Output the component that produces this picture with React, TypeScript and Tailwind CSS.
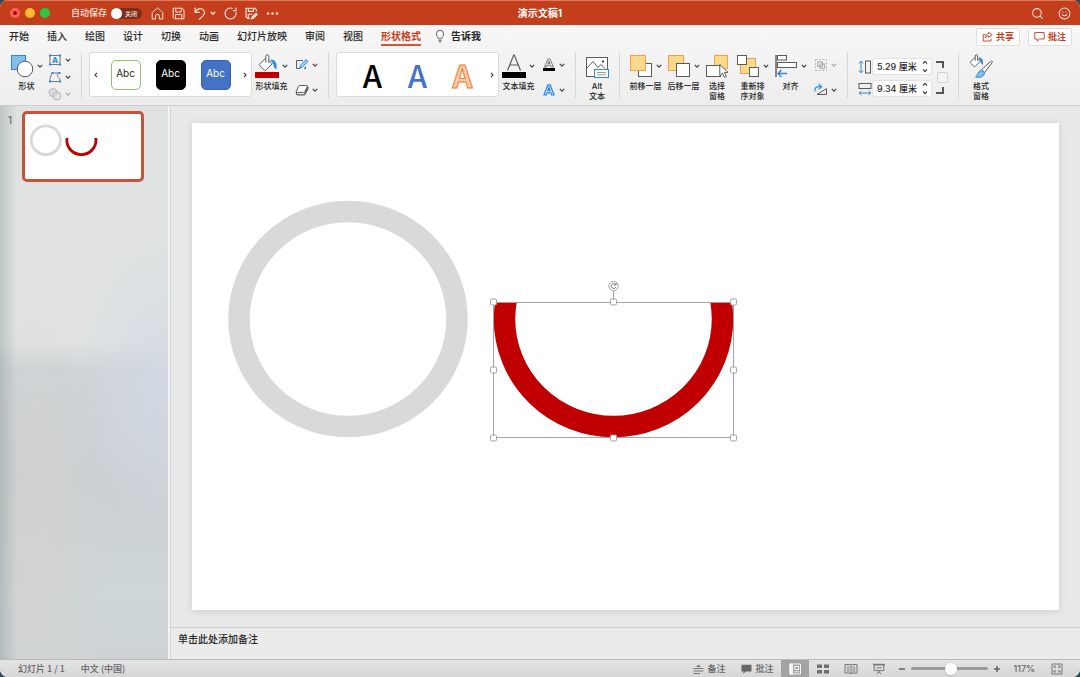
import { Search, Smile } from "lucide-react";
import React, { useState } from "react";

const TABS = ["开始", "插入", "绘图", "设计", "切换", "动画", "幻灯片放映", "审阅", "视图", "形状格式"];

const BLUE = "#2b88d8";
const INK = "#5a5a5a";

function Chevron({ dim }: { dim?: boolean }): React.ReactElement {
	return (
		<svg viewBox="0 0 6 6" className="h-[6px] w-[6px] shrink-0" fill="none" stroke={dim ? "#a8a8a8" : "#444"} strokeWidth="1.2">
			<path d="M0.8 1.8 L3 4.2 L5.2 1.8" />
		</svg>
	);
}

function Arrow({ left }: { left?: boolean }): React.ReactElement {
	return (
		<button aria-label={left ? "上一个" : "下一个"} className="flex h-full w-[6px] shrink-0 items-center">
			<svg viewBox="0 0 6 8" className="h-2 w-[6px]" fill="none" stroke="#333" strokeWidth="1.1">
				<path d={left ? "M4 1.8 L2 4 L4 6.2" : "M2 1.8 L4 4 L2 6.2"} />
			</svg>
		</button>
	);
}

function Icon({ children, small }: { children: React.ReactNode; small?: boolean }): React.ReactElement {
	return small ? (
		<svg viewBox="0 0 14 14" className="h-[14px] w-[14px] shrink-0" fill="none" stroke={INK} strokeWidth="1">
			{children}
		</svg>
	) : (
		<svg viewBox="0 0 24 24" className="h-6 w-6 shrink-0" fill="none" stroke={INK} strokeWidth="1">
			{children}
		</svg>
	);
}

function Tool({
	lines,
	menu,
	children,
}: {
	lines: string[];
	menu?: boolean;
	children: React.ReactNode;
}): React.ReactElement {
	return (
		<button className={`flex shrink-0 flex-col items-center pt-[2px] ${menu ? "w-[33px]" : "w-6"}`}>
			<span className="flex h-6 items-center gap-[3px]">
				<Icon>{children}</Icon>
				{menu && <Chevron />}
			</span>
			<span className="mt-[3px] flex flex-col items-center text-[8px] leading-[10px] font-medium whitespace-nowrap">
				{lines.map(line => (
					<span key={line}>{line}</span>
				))}
			</span>
		</button>
	);
}

function SmallTool({ label, dim, children }: { label: string; dim?: boolean; children: React.ReactNode }): React.ReactElement {
	return (
		<button aria-label={label} className="flex flex-1 items-center gap-[3px]">
			<Icon small>{children}</Icon>
			<Chevron dim={dim} />
		</button>
	);
}

function SmallColumn({ children }: { children: React.ReactNode }): React.ReactElement {
	return <div className="flex h-[50px] w-[23px] shrink-0 flex-col">{children}</div>;
}

function Divider(): React.ReactElement {
	return <div className="ml-[10px] h-[46px] w-px shrink-0 bg-[#d6d6d6]" />;
}

function Gallery({ children, back }: { children: React.ReactNode; back?: boolean }): React.ReactElement {
	return (
		<div className="mr-[3px] ml-[7px] flex h-[45px] w-[163px] shrink-0 items-center rounded-[3px] border border-[#dadada] bg-white px-[3px]">
			{back ? <Arrow left /> : <span className="w-[6px]" />}
			<div className="flex flex-1 items-center justify-center gap-[15px]">{children}</div>
			<Arrow />
		</div>
	);
}

function TitleBar(): React.ReactElement {
	const icon = "h-[13px] w-[13px]";
	return (
		<header className="grid h-[25px] shrink-0 grid-cols-[1fr_auto_1fr] items-center border-t border-[#d87c62] bg-[#c43e1c] text-[#fbe3db]">
			<div className="flex items-center pl-[10px]">
				<div className="flex gap-[5px]">
					<button aria-label="关闭窗口" className="flex h-[10px] w-[10px] items-center justify-center rounded-full bg-[#ff5f57]">
						<span className="h-1 w-1 rounded-full bg-[#8c1410]" />
					</button>
					<button aria-label="最小化" className="h-[10px] w-[10px] rounded-full bg-[#febc2e]" />
					<button aria-label="缩放" className="h-[10px] w-[10px] rounded-full bg-[#28c840]" />
				</div>
				<label className="relative ml-[21px] flex items-center gap-1 text-[9px] leading-3 font-medium">
					自动保存
					<input
						type="checkbox"
						className="h-[11px] w-[31px] appearance-none rounded-full bg-[#7c2f1d] before:block before:h-[11px] before:w-[11px] before:rounded-full before:bg-white"
					/>
					<span className="absolute right-[5px] text-[6px] leading-[11px]">关闭</span>
				</label>
				<div className="ml-[9px] flex items-center gap-2">
					<button aria-label="主页">
						<svg viewBox="0 0 13 13" className={icon} fill="none" stroke="currentColor" strokeWidth="1">
							<path
								d="M1.2 5.6 L6.5 0.8 L11.8 5.6 V12 H8.4 V9 Q8.4 7.4 6.5 7.4 Q4.6 7.4 4.6 9 V12 H1.2 Z"
								strokeLinejoin="round"
							/>
						</svg>
					</button>
					<button aria-label="保存">
						<svg viewBox="0 0 13 13" className={icon} fill="none" stroke="currentColor" strokeWidth="1">
							<path
								d="M1.2 1.2 H10.2 L12 3 V11.8 H2.6 L1.2 10.4 Z M3.8 1.2 V5 H9.2 V1.2 M3.5 11.8 V7.5 H9.8 V11.8"
								strokeLinejoin="round"
							/>
						</svg>
					</button>
					<button aria-label="撤消" className="flex items-center gap-1">
						<svg viewBox="0 0 13 13" className={icon} fill="none" stroke="currentColor" strokeWidth="1.1">
							<path d="M2 0.6 V5.4 H6.8 M2 5.4 C4 2.2 6.8 1 9.2 2 C12 3.4 12 6.8 10 8.8 L6 12.6" />
						</svg>
						<svg viewBox="0 0 6 6" className="h-[6px] w-[6px]" fill="none" stroke="currentColor" strokeWidth="1.3">
							<path d="M0.8 1.8 L3 4.2 L5.2 1.8" />
						</svg>
					</button>
					<button aria-label="重复">
						<svg viewBox="0 0 13 13" className={icon} fill="none" stroke="currentColor" strokeWidth="1.1">
							<path d="M8.6 1.4 A5.5 5.5 0 1 0 11.8 5 M12 0.6 V3.6 H9" />
						</svg>
					</button>
					<button aria-label="另存为">
						<svg viewBox="0 0 13 13" className={icon} fill="none" stroke="currentColor" strokeWidth="1.1">
							<path d="M5 11.4 H2.6 L1 9.8 V1.2 H9.8 L11.4 2.8 V4.6 M3.4 1.2 V4.4 H8.4 V1.2 M3.2 11.2 V7.2 H7.4" />
							<path d="M5.6 12.8 L6.6 9.8 L11 5.4 L13 7.4 L8.6 11.8 Z" fill="currentColor" stroke="none" />
						</svg>
					</button>
					<button aria-label="更多">
						<svg viewBox="0 0 13 13" className={icon} fill="currentColor">
							<circle cx="2" cy="6.5" r="1.2" />
							<circle cx="6.5" cy="6.5" r="1.2" />
							<circle cx="11" cy="6.5" r="1.2" />
						</svg>
					</button>
				</div>
			</div>
			<h1 className="text-[10px] leading-3 font-bold text-white">演示文稿1</h1>
			<div className="flex items-center justify-end gap-[14px] pr-[9px]">
				<button aria-label="搜索">
					<Search className={icon} strokeWidth={1.9} />
				</button>
				<button aria-label="反馈">
					<Smile className={icon} strokeWidth={1.9} />
				</button>
			</div>
		</header>
	);
}

function TabBar(): React.ReactElement {
	const [active, setActive] = useState("形状格式");
	const action =
		"flex h-[18px] items-center gap-[3px] rounded-[2px] border border-[#e0dedd] bg-white px-[5px] text-[9px] leading-3 font-bold text-[#c43e1c]";

	return (
		<div className="flex h-[23px] shrink-0 items-center justify-between pr-2 pl-[9px]">
			<nav className="flex h-full items-start gap-[18px] text-[10px] leading-3 font-medium">
				{TABS.map(tab => (
					<button
						key={tab}
						onClick={() => setActive(tab)}
						className={`h-[21px] border-b-2 pt-[5px] pb-[2px] leading-3 ${
							tab === active ? "border-[#d4573c] font-bold text-[#c43e1c]" : "border-transparent"
						}`}
					>
						{tab}
					</button>
				))}
				<button className="-ml-[5px] flex h-[21px] items-center gap-[5px] font-bold">
					<svg viewBox="0 0 12 14" className="h-[14px] w-3" fill="none" stroke={INK} strokeWidth="1">
						<path d="M4.4 9.8 C4.4 8 2.4 7.4 2.4 4.8 A3.6 3.6 0 0 1 9.6 4.8 C9.6 7.4 7.6 8 7.6 9.8 Z M4.6 11.4 H7.4 M5 13 H7" />
					</svg>
					告诉我
				</button>
			</nav>
			<div className="flex gap-2">
				<button className={action}>
					<svg viewBox="0 0 11 11" className="h-[11px] w-[11px]" fill="none" stroke="currentColor" strokeWidth="0.9">
						<path d="M3.4 3.6 H1.2 V10 H9 V7.6" />
						<path d="M6.6 1.2 L10.2 3.8 L6.6 6.4 V4.9 C5 4.9 4 5.6 3.2 7.2 C3.3 4.6 4.6 2.9 6.6 2.7 Z" strokeLinejoin="round" />
					</svg>
					共享
				</button>
				<button className={action}>
					<svg viewBox="0 0 11 11" className="h-[11px] w-[11px]" fill="none" stroke="currentColor" strokeWidth="0.9">
						<path d="M0.8 1.5 H10.2 V8 H5.4 L3.2 10.2 V8 H0.8 Z" strokeLinejoin="round" />
					</svg>
					批注
				</button>
			</div>
		</div>
	);
}

function SizeField({
	label,
	value,
	onChange,
	children,
}: {
	label: string;
	value: string;
	onChange: (v: string) => void;
	children: React.ReactNode;
}): React.ReactElement {
	return (
		<label className="flex items-center">
			<Icon small>{children}</Icon>
			<span className="flex h-[17px] w-[60px] items-center rounded-[3px] border border-[#e2e2e2] bg-white pr-[3px] pl-1">
				<input
					type="text"
					aria-label={label}
					value={value}
					onChange={e => onChange(e.target.value)}
					className="w-full min-w-0 text-[9px] leading-3 font-medium outline-none"
				/>
				<svg viewBox="0 0 6 13" className="h-[13px] w-[6px] shrink-0" fill="none" stroke="#333" strokeWidth="1.1">
					<path d="M1 3.6 L3 1.4 L5 3.6 M1 9.4 L3 11.6 L5 9.4" />
				</svg>
			</span>
		</label>
	);
}

function Ribbon(): React.ReactElement {
	const [height, setHeight] = useState("5.29 厘米");
	const [width, setWidth] = useState("9.34 厘米");
	const abc = "h-[30px] w-[30px] rounded-[5px] border pb-[3px] text-[10px] leading-4";
	const art = "h-[34px] w-[30px] font-['Noto_Sans_CJK_SC',sans-serif] text-[31px] leading-[34px]";

	return (
		<div className="flex h-[58px] shrink-0 items-start overflow-hidden border-b border-[#cfcfcf] pt-1 pl-[10px]">
			<Tool lines={["形状"]} menu>
				<rect x="1.5" y="1.5" width="14" height="14" fill="#83bdec" stroke={BLUE} />
				<circle cx="15" cy="15" r="7.8" fill="#fff" />
			</Tool>
			<div className="ml-[5px]">
				<SmallColumn>
					<SmallTool label="文本框">
						<rect x="2" y="2.5" width="10" height="9" stroke="#777" />
						<text x="7" y="10" fontSize="8" fontWeight="700" textAnchor="middle" fill={BLUE} stroke="none">
							A
						</text>
						<path d="M1 1.5h2v2h-2z M11 1.5h2v2h-2z M1 10.5h2v2h-2z M11 10.5h2v2h-2z" fill={BLUE} stroke="none" />
					</SmallTool>
					<SmallTool label="编辑形状">
						<path d="M4.5 3 H11.5 C8.5 4.5 9 6.5 10.5 7.5 C12 8.5 12.2 10 12 11.5 H2 C2 8 2 6 4.5 3 Z" stroke="#777" />
						<path d="M3.5 2h2v2h-2z M10.5 2h2v2h-2z M1 10.5h2v2h-2z M11 10.5h2v2h-2z" fill={BLUE} stroke="none" />
					</SmallTool>
					<SmallTool label="合并形状" dim>
						<circle cx="5" cy="5.5" r="4" stroke="#b5b5b5" fill="#dcdcdc" />
						<circle cx="9" cy="9" r="4" stroke="#b5b5b5" fill="#dcdcdc" fillOpacity="0.6" />
					</SmallTool>
				</SmallColumn>
			</div>
			<Divider />

			<Gallery back>
				<button className={`${abc} border-[#8fc06c] bg-white`}>Abc</button>
				<button className={`${abc} border-black bg-black text-white`}>Abc</button>
				<button className={`${abc} border-[#3562b0] bg-[#4472c4] text-white`}>Abc</button>
			</Gallery>
			<Tool lines={["形状填充"]} menu>
				<path
					d="M10.8 4 L4.6 10.2 C4.2 10.6 4.2 11 4.6 11.4 L9.4 16.2 C9.8 16.6 10.4 16.6 10.8 16.2 L17.2 9.8 L14 6.6"
					fill="#fff"
				/>
				<path d="M10.8 8.6 V2.4 Q10.8 0.8 12.2 0.8 Q13.8 0.8 13.8 2.4 V8.8" fill="#fff" />
				<path d="M15 5.4 C20 5.2 22.4 8.4 21.4 15.4 C19.4 15 18.6 12.4 18.2 9.6 Z" fill={BLUE} stroke="none" />
				<rect x="0" y="18" width="24" height="6" fill="#c00000" stroke="none" />
			</Tool>
			<div className="ml-[7px]">
				<SmallColumn>
					<SmallTool label="形状轮廓">
						<path d="M8 2.5 H1.5 V10.5 H5 M9 10.5 H10.5 V8.5" />
						<path d="M4.6 10.4 L5.4 7.2 L11 1.6 L13 3.4 L7.4 9.2 Z" fill="#9fd0f5" stroke={BLUE} />
					</SmallTool>
					<SmallTool label="形状效果">
						<path
							d="M4.6 2.5 H11.4 Q12.6 2.5 12.2 3.6 L9.8 8.6 Q9.4 9.4 8.4 9.4 H2.2 Q1 9.4 1.4 8.4 L3.6 3.2 Q4 2.5 4.6 2.5 Z"
							fill="#fff"
						/>
						<path d="M1.3 9 Q1.4 11.8 2.8 11.8 H8.6 Q9.6 11.8 10.2 10.8 L12.8 6 Q13.2 5 12.4 3.4" strokeWidth="1.3" />
						<path d="M9.4 9.4 L12.2 4.4 L12.6 6 L9.6 11.4 Z" fill={INK} stroke="none" />
					</SmallTool>
				</SmallColumn>
			</div>
			<Divider />

			<Gallery>
				<button className={`${art} font-medium text-black`}>A</button>
				<button className={`${art} font-medium text-[#4472c4]`}>A</button>
				<button className={`${art} font-bold text-[#f8cbad] [-webkit-text-stroke:1px_#ed7d31]`}>A</button>
			</Gallery>
			<Tool lines={["文本填充"]} menu>
				<path d="M5.5 16.5 L11.7 1 H12.3 L18.5 16.5 M7.8 11 H16.2" strokeWidth="1.2" />
				<rect x="0" y="18" width="24" height="6" fill="#000" stroke="none" />
			</Tool>
			<div className="ml-[7px]">
				<SmallColumn>
					<SmallTool label="文本轮廓">
						<path d="M2.5 9 L6 1 H8 L11.5 9 H9.4 L8.7 7.2 H5.3 L4.6 9 Z M6 5.6 H8 L7 3 Z" strokeWidth="0.8" />
						<rect x="1" y="10" width="12" height="3" fill="#000" stroke="none" />
					</SmallTool>
					<SmallTool label="文本效果">
						<path
							d="M2 12 L5.8 1.8 H8.2 L12 12 H9.6 L8.9 9.8 H5.1 L4.4 12 Z M5.9 7.6 H8.1 L7 4.2 Z"
							fill="#d3e9fb"
							stroke={BLUE}
							strokeWidth="1.2"
						/>
					</SmallTool>
				</SmallColumn>
			</div>
			<Divider />

			<div className="ml-[9px]">
				<Tool lines={["Alt", "文本"]}>
					<rect x="1.5" y="3.5" width="21" height="19" fill="#fff" />
					<path d="M1.5 14.5 L8 7.5 L13 13.5 L16 10.5 L20 14.5" />
					<circle cx="18" cy="7.5" r="1.2" fill={INK} stroke="none" />
					<rect x="9.5" y="15.5" width="14" height="8" fill="#fff" stroke={BLUE} />
					<path d="M12 18.5 H21 M12 20.8 H21" stroke="#999" />
				</Tool>
			</div>
			<Divider />

			<div className="ml-[9px] flex">
				<div className="flex gap-[5px]">
					<Tool lines={["前移一层"]} menu>
						<rect x="9.5" y="9.5" width="13" height="13" fill="#fff" />
						<rect x="1.5" y="1.5" width="15" height="15" fill="#fbd98a" stroke="#f0a04c" />
					</Tool>
					<Tool lines={["后移一层"]} menu>
						<rect x="1.5" y="1.5" width="15" height="15" fill="#fbd98a" stroke="#f0a04c" />
						<rect x="9.5" y="9.5" width="13" height="13" fill="#fff" />
					</Tool>
					<Tool lines={["选择", "窗格"]}>
						<rect x="9.5" y="1.5" width="13" height="13" fill="#fbd98a" stroke="#f0a04c" />
						<rect x="1.5" y="11.5" width="14" height="11" fill="#fff" />
						<path d="M14.8 10.5 V21.6 L17.5 19.2 L19.4 23.4 L21.4 22.5 L19.4 18.4 H23 Z" fill="#fff" />
					</Tool>
				</div>
				<div className="ml-[7px] flex gap-[5px]">
					<Tool lines={["重新排", "序对象"]} menu>
						<rect x="4.5" y="4.5" width="15" height="15" fill="#fbd98a" stroke="#f0a04c" />
						<rect x="1.5" y="1.5" width="9" height="9" fill="#fff" />
						<rect x="13.5" y="13.5" width="9" height="9" fill="#fff" />
					</Tool>
					<Tool lines={["对齐"]} menu>
						<path d="M2 1 V23" strokeWidth="1.4" />
						<rect x="3.5" y="1.5" width="9" height="4.5" fill="#fff" />
						<rect x="3.5" y="8.5" width="19" height="5" fill="#fff" />
						<path d="M4 19.5 H13 M7.5 16 L4 19.5 L7.5 23" stroke={BLUE} strokeWidth="1.3" />
					</Tool>
				</div>
				<div className="ml-[7px]">
					<SmallColumn>
						<SmallTool label="组合" dim>
							<rect x="1.5" y="1.5" width="11" height="11" stroke="#b5b5b5" strokeDasharray="2 1.5" />
							<rect x="3.8" y="3.8" width="4.6" height="4.6" stroke="#a5a5a5" />
							<rect x="6" y="6" width="4.4" height="4.4" stroke="#a5a5a5" />
						</SmallTool>
						<SmallTool label="旋转">
							<path d="M3 11.5 L12.5 5.6 V11.5 Z" />
							<path d="M1.2 8.4 C0.2 4.4 3.2 3 7 3.8 M4.6 0.8 L7.6 3.9 L4.6 6.4" stroke={BLUE} strokeWidth="1.2" />
						</SmallTool>
					</SmallColumn>
				</div>
			</div>
			<Divider />

			<div className="ml-[10px] flex">
				<div className="flex flex-col gap-[5px] pt-[6px]">
					<SizeField label="高度" value={height} onChange={setHeight}>
						<rect x="7.5" y="1" width="5" height="12" />
						<path d="M3 1.2 V12.8 M1 3.4 L3 1.2 L5 3.4 M1 10.6 L3 12.8 L5 10.6" stroke={BLUE} />
					</SizeField>
					<SizeField label="宽度" value={width} onChange={setWidth}>
						<rect x="1" y="1.5" width="12" height="5" />
						<path d="M1.2 11 H12.8 M3.4 9 L1.2 11 L3.4 13 M10.6 9 L12.8 11 L10.6 13" stroke={BLUE} />
					</SizeField>
				</div>
				<div className="ml-1 flex w-3 flex-col items-center gap-1 pt-[9px]">
					<span className="mr-1 h-[7px] w-2 border-t-2 border-r-2 border-[#555]" />
					<input
						type="checkbox"
						aria-label="锁定纵横比"
						className="h-[11px] w-[11px] appearance-none rounded-[2px] border border-[#d2d2d2] bg-[#f3f3f3]"
					/>
					<span className="mr-1 h-[7px] w-2 border-r-2 border-b-2 border-[#555]" />
				</div>
			</div>
			<Divider />

			<div className="ml-[10px]">
				<Tool lines={["格式", "窗格"]}>
					<path d="M6.2 3.2 L1.6 7.8 Q1 8.4 1.6 9 L5 12.4 Q5.6 13 6.2 12.4 L11.4 7.2 L8.8 4.6" fill="#fff" />
					<path d="M6.2 6.6 V2 Q6.2 0.8 7.4 0.8 Q8.6 0.8 8.6 2 V6.8" fill="#fff" />
					<path d="M9.6 3.4 C13 3.2 14.6 5.8 13.8 11 C12.2 10.4 11.8 8.4 11.6 7 Z" fill={BLUE} stroke="none" />
					<path d="M12.6 15.6 L21.8 7.4 C22.8 6.6 24 7.6 23.2 8.6 L15.6 18.4 Z" fill="#fff" />
					<path d="M6.5 22.8 C9 21.8 8.6 17 12.4 16 L15.4 18.6 C15.6 23 10 24.4 6.5 22.8 Z" fill="#83bdec" stroke={BLUE} />
				</Tool>
			</div>
		</div>
	);
}

// Grey ring plus the cut red arc, shared by the canvas and the thumbnail
function SlideShapes({ id }: { id: string }): React.ReactElement {
	return (
		<>
			<clipPath id={id}>
				<rect x="300" y="179" width="250" height="140" />
			</clipPath>
			<ellipse cx="156" cy="196" rx="109" ry="107.5" fill="none" stroke="#d9d9d9" strokeWidth="21.5" />
			<ellipse cx="421.5" cy="196" rx="109" ry="107.5" fill="none" stroke="#c00000" strokeWidth="21.5" clipPath={`url(#${id})`} />
		</>
	);
}

const HANDLES = [
	[301.5, 179],
	[421.5, 179],
	[541.5, 179],
	[301.5, 247],
	[541.5, 247],
	[301.5, 315],
	[421.5, 315],
	[541.5, 315],
];

function Canvas(): React.ReactElement {
	return (
		<svg viewBox="0 0 867 487" className="block w-full bg-white shadow-[0_1px_8px_rgba(0,0,0,0.13)]">
			<SlideShapes id="arc-main" />
			<g fill="#fff" stroke="#a3a3a3" strokeWidth="1">
				<rect x="301.5" y="179.5" width="240" height="135" fill="none" />
				<path d="M421.5 168 V179" />
				{HANDLES.map(([x, y]) => (
					<rect key={`${x}-${y}`} x={x - 3} y={y - 3} width="6" height="6" rx="1.2" />
				))}
				<circle cx="421.5" cy="163" r="4.6" />
				<path d="M423.2 161.2 A2.4 2.4 0 1 0 423.8 164 M424 160 V162 H422" fill="none" stroke="#666" strokeWidth="0.9" />
			</g>
		</svg>
	);
}

function ViewButton({ label, active, children }: { label: string; active?: boolean; children: React.ReactNode }): React.ReactElement {
	return (
		<button aria-label={label} className={`flex h-full w-7 items-center justify-center ${active ? "bg-[#a3a3a3]" : ""}`}>
			<svg viewBox="0 0 14 12" className="h-3 w-[14px]" fill="none" stroke={active ? "#f5f5f5" : "#777"} strokeWidth="1">
				{children}
			</svg>
		</button>
	);
}

function StatusBar(): React.ReactElement {
	const [zoom, setZoom] = useState(51);

	return (
		<footer className="flex h-[18px] shrink-0 items-center justify-between border-t border-[#b9b9b9] bg-linear-to-b from-[#e4e4e4] to-[#d6d6d6] pr-[17px] pl-[18px] text-[9px] leading-3 text-[#666]">
			<div className="flex gap-4 font-['Noto_Sans_CJK_SC',sans-serif] font-medium">
				<span>幻灯片 1 / 1</span>
				<span>中文 (中国)</span>
			</div>
			<div className="flex h-full items-center">
				<button className="flex items-center gap-[3px] font-medium">
					<svg viewBox="0 0 11 10" className="h-[10px] w-[11px]" stroke="#777" strokeWidth="1">
						<path d="M0.5 4.5 H10.5 M0.5 7 H10.5 M0.5 9.5 H7" />
						<path d="M3 3 L5.5 0.4 L8 3 Z" fill="#777" stroke="none" />
					</svg>
					备注
				</button>
				<button className="mr-2 ml-4 flex items-center gap-[3px] font-medium">
					<svg viewBox="0 0 11 10" className="h-[10px] w-[11px]" fill="#666">
						<path d="M0.5 0.8 H10.5 V7.4 H4.8 L2.4 9.8 V7.4 H0.5 Z" />
					</svg>
					批注
				</button>
				<ViewButton label="普通视图" active>
					<path d="M2 1 H12.5 V11 H2 Z" />
					<path d="M2 1 H4.6 V11 H2 Z" fill="#f5f5f5" />
					<path d="M6.8 3.5 H10.6 V6.5 H6.8 Z M6.5 8.8 H11" />
				</ViewButton>
				<ViewButton label="幻灯片浏览">
					<path d="M1 1.5h5v3.6h-5z M8 1.5h5v3.6h-5z M1 7h5v3.6h-5z M8 7h5v3.6h-5z" fill="#6e6e6e" stroke="none" />
				</ViewButton>
				<ViewButton label="阅读视图">
					<path d="M1 1.5 H6 L7 2.3 L8 1.5 H13 V10 H8 L7 11 L6 10 H1 Z M7 2.3 V11 M2.8 4 H5.4 M2.8 6 H5.4 M2.8 8 H5.4 M8.6 4 H11.2 M8.6 6 H11.2 M8.6 8 H11.2" />
				</ViewButton>
				<ViewButton label="幻灯片放映视图">
					<path d="M1 1.6 H13" strokeWidth="1.6" />
					<path d="M2.2 2 V7.6 H11.8 V2 M4.5 4.8 H9.5 M7 7.6 V10 M4.6 11 L7 9 L9.4 11" />
				</ViewButton>
				<button aria-label="缩小" className="ml-[5px]">
					<svg viewBox="0 0 8 8" className="h-2 w-2" stroke="#666" strokeWidth="1.6">
						<path d="M1 4 H7" />
					</svg>
				</button>
				<input
					type="range"
					aria-label="缩放级别"
					value={zoom}
					onChange={e => setZoom(Number(e.target.value))}
					className="mx-[5px] h-[3px] w-[77px] appearance-none rounded-full bg-[#9a9a9a] [&::-webkit-slider-thumb]:h-3 [&::-webkit-slider-thumb]:w-3 [&::-webkit-slider-thumb]:appearance-none [&::-webkit-slider-thumb]:rounded-full [&::-webkit-slider-thumb]:bg-white [&::-webkit-slider-thumb]:shadow"
				/>
				<button aria-label="放大">
					<svg viewBox="0 0 8 8" className="h-2 w-2" stroke="#666" strokeWidth="1.6">
						<path d="M1 4 H7 M4 1 V7" />
					</svg>
				</button>
				<span className="mr-4 ml-3 font-medium">117%</span>
				<button aria-label="适应窗口">
					<svg viewBox="0 0 12 12" className="h-3 w-3" fill="none" stroke="#777" strokeWidth="1">
						<path d="M1 1 H11 V11 H1 Z M3.2 3.2 L5 5 M8.8 3.2 L7 5 M3.2 8.8 L5 7 M8.8 8.8 L7 7 M3 4.6 V3 H4.6 M7.4 3 H9 V4.6 M9 7.4 V9 H7.4 M4.6 9 H3 V7.4" />
					</svg>
				</button>
			</div>
		</footer>
	);
}

export default function App(): React.ReactElement {
	return (
		<div className="h-screen bg-[#2c4a52] font-[Inter,'Noto_Sans_CJK_SC',sans-serif] text-[#262626]">
			<div className="flex h-full flex-col overflow-hidden rounded-[8px] bg-[#f4f4f4]">
				<TitleBar />
				<div className="shrink-0 bg-linear-to-b from-[#f7f7f7] to-[#ededed]">
					<TabBar />
					<Ribbon />
				</div>

				<div className="flex min-h-0 flex-1">
					<aside className="flex w-[168px] shrink-0 items-start gap-2 bg-[linear-gradient(to_right,rgba(110,125,130,0.28),transparent_10%),radial-gradient(ellipse_at_100%_51%,rgba(210,218,230,0.9),transparent_38%),radial-gradient(ellipse_at_20%_80%,rgba(211,209,207,0.8),transparent_38%),linear-gradient(to_bottom,#dfe2e1_43%,#cfd3d6_48%,#cacfd2_68%,#ced6d7_88%,#cdd3d5)] pt-[5px] pl-2">
						<span className="w-[6px] pt-[3px] text-[10px] leading-3 text-[#555]">1</span>
						<button aria-label="幻灯片 1" className="w-[122px] overflow-hidden rounded-[5px] border-3 border-[#c4533a] bg-white">
							<svg viewBox="0 0 867 487" className="block w-full">
								<SlideShapes id="arc-thumb" />
							</svg>
						</button>
					</aside>
					<main className="ml-[2px] flex min-w-0 flex-1 flex-col border-l border-[#d5d5d5] bg-[#e9e9e9]">
						<div className="min-h-0 flex-1 px-[21px] pt-[17px]">
							<Canvas />
						</div>
						<div className="h-8 shrink-0 border-t border-[#cfcfcf] bg-[#ebebeb] px-[7px] pt-[5px] text-[10px] leading-3 font-medium">
							单击此处添加备注
						</div>
					</main>
				</div>
				<StatusBar />
			</div>
		</div>
	);
}
